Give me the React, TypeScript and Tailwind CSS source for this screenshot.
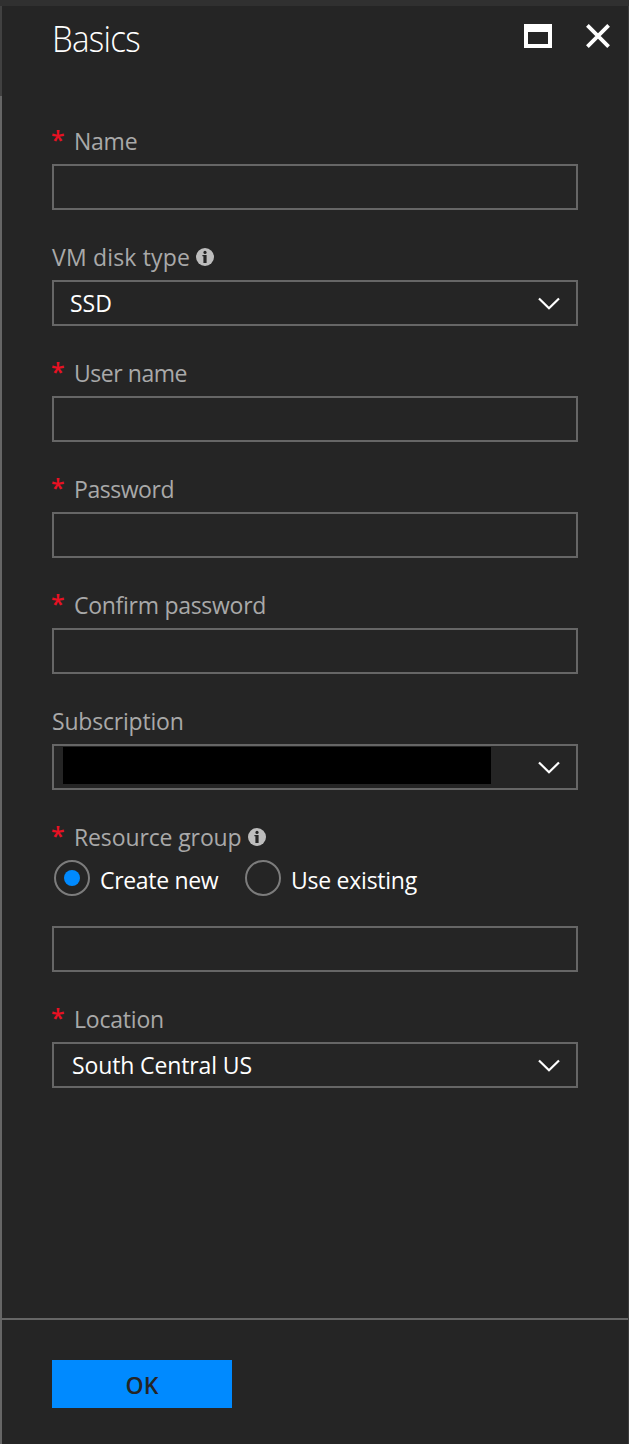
import type { ReactNode } from "react";

function InfoIcon({ className }: { className: string }) {
  return (
    <svg viewBox="0 0 18 18" className={"h-[18px] w-[18px] shrink-0 " + className}>
      <circle cx="9" cy="9" r="9" fill="#bdbdbd" />
      <circle cx="9" cy="4.4" r="1.6" fill="#252525" />
      <path d="M6.4 7h4.2v8H7.4V8.2h-1z" fill="#252525" />
    </svg>
  );
}

function Chevron() {
  return (
    <svg viewBox="0 0 22 14" className="mt-[2px] h-[14px] w-[22px] shrink-0" fill="none" stroke="#fff" strokeWidth="2.2">
      <path d="M1 1.5 11 11.3 21 1.5" />
    </svg>
  );
}

function Label({ text, tracking, required, info }: { text: string; tracking: string; required?: boolean; info?: string }) {
  return (
    <div className="flex h-[70px] items-end pb-[11px] leading-6 text-[#a9a9a9]">
      {required && (
        <span className="-ml-px mr-px h-[27px] w-[22px] shrink-0 text-[25px] font-semibold leading-[26px] text-[#e81123]">*</span>
      )}
      <span className={"whitespace-nowrap " + tracking}>{text}</span>
      {info && <InfoIcon className={info} />}
    </div>
  );
}

function Box({ children }: { children?: ReactNode }) {
  return (
    <div className="flex h-[46px] items-center justify-between border-2 border-[#666] pr-4 text-white">{children}</div>
  );
}

function Radio({ checked }: { checked?: boolean }) {
  return (
    <span className="flex h-9 w-9 shrink-0 items-center justify-center rounded-full border-2 border-[#7c7c7c]">
      {checked && <span className="h-4 w-4 rounded-full bg-[#008aff]" />}
    </span>
  );
}

export default function App() {
  return (
    <div className="flex h-[1444px] w-[629px] flex-col bg-[#252525] font-['Open_Sans',sans-serif] text-[23px]">
      <div className="h-[6px] shrink-0 bg-[#303030]" />
      <div className="flex min-h-0 flex-1">
        <div className="flex w-[2px] shrink-0 flex-col">
          <div className="h-[90px] bg-[#414141]" />
          <div className="flex-1 bg-[#666]" />
        </div>
        <div className="flex flex-1 flex-col border-r border-[#3c3c3c]">
          <header className="flex h-[88px] shrink-0 items-start pl-[50px] pr-[18px] text-white">
            <h1 className="mt-[13px] flex-1 origin-left scale-x-[0.92] text-[36px] font-light leading-10 tracking-[-0.8px]">Basics</h1>
            <svg viewBox="0 0 28 24" className="mt-[18px] h-6 w-7">
              <path d="M0 0h28v24H0zM4 8v12h20V8z" fill="#fff" fillRule="evenodd" />
            </svg>
            <svg viewBox="0 0 24 24" className="ml-[34px] mt-[18px] h-6 w-6" stroke="#fff" strokeWidth="3.8">
              <path d="M1.4 1.4 22.6 22.6M22.6 1.4 1.4 22.6" />
            </svg>
          </header>
          <main className="flex-1 px-[50px]">
            <Label text="Name" tracking="tracking-[-0.25px]" required />
            <Box />
            <Label text="VM disk type" tracking="tracking-[0.18px]" info="ml-[6px] mb-[3px]" />
            <Box>
              <span className="pl-4">SSD</span>
              <Chevron />
            </Box>
            <Label text="User name" tracking="tracking-[-0.45px]" required />
            <Box />
            <Label text="Password" tracking="tracking-[-0.45px]" required />
            <Box />
            <Label text="Confirm password" tracking="tracking-[-0.28px]" required />
            <Box />
            <Label text="Subscription" tracking="tracking-[-0.2px]" />
            <Box>
              <span className="-mt-[3px] ml-[9px] h-[37px] w-[428px] bg-black" />
              <Chevron />
            </Box>
            <Label text="Resource group" tracking="tracking-[-0.12px]" required info="ml-[6px] mb-[3px]" />
            <div className="flex h-9 items-center pl-[2px] text-white">
              <Radio checked />
              <span className="ml-[10px] mt-[3px] w-[145px] whitespace-nowrap leading-6 tracking-[-0.32px]">Create new</span>
              <Radio />
              <span className="ml-[10px] mt-[3px] whitespace-nowrap leading-6 tracking-[-0.25px]">Use existing</span>
            </div>
            <div className="mt-[30px]">
              <Box />
            </div>
            <Label text="Location" tracking="tracking-[-0.2px]" required />
            <Box>
              <span className="pl-[18px] tracking-[-0.12px]">South Central US</span>
              <Chevron />
            </Box>
          </main>
          <footer className="h-[126px] shrink-0 border-t-2 border-[#666] pl-[50px] pt-10">
            <button className="flex h-12 w-[180px] items-center justify-center bg-[#008aff] pt-[2px] font-semibold text-[#252525]">OK</button>
          </footer>
        </div>
      </div>
    </div>
  );
}
